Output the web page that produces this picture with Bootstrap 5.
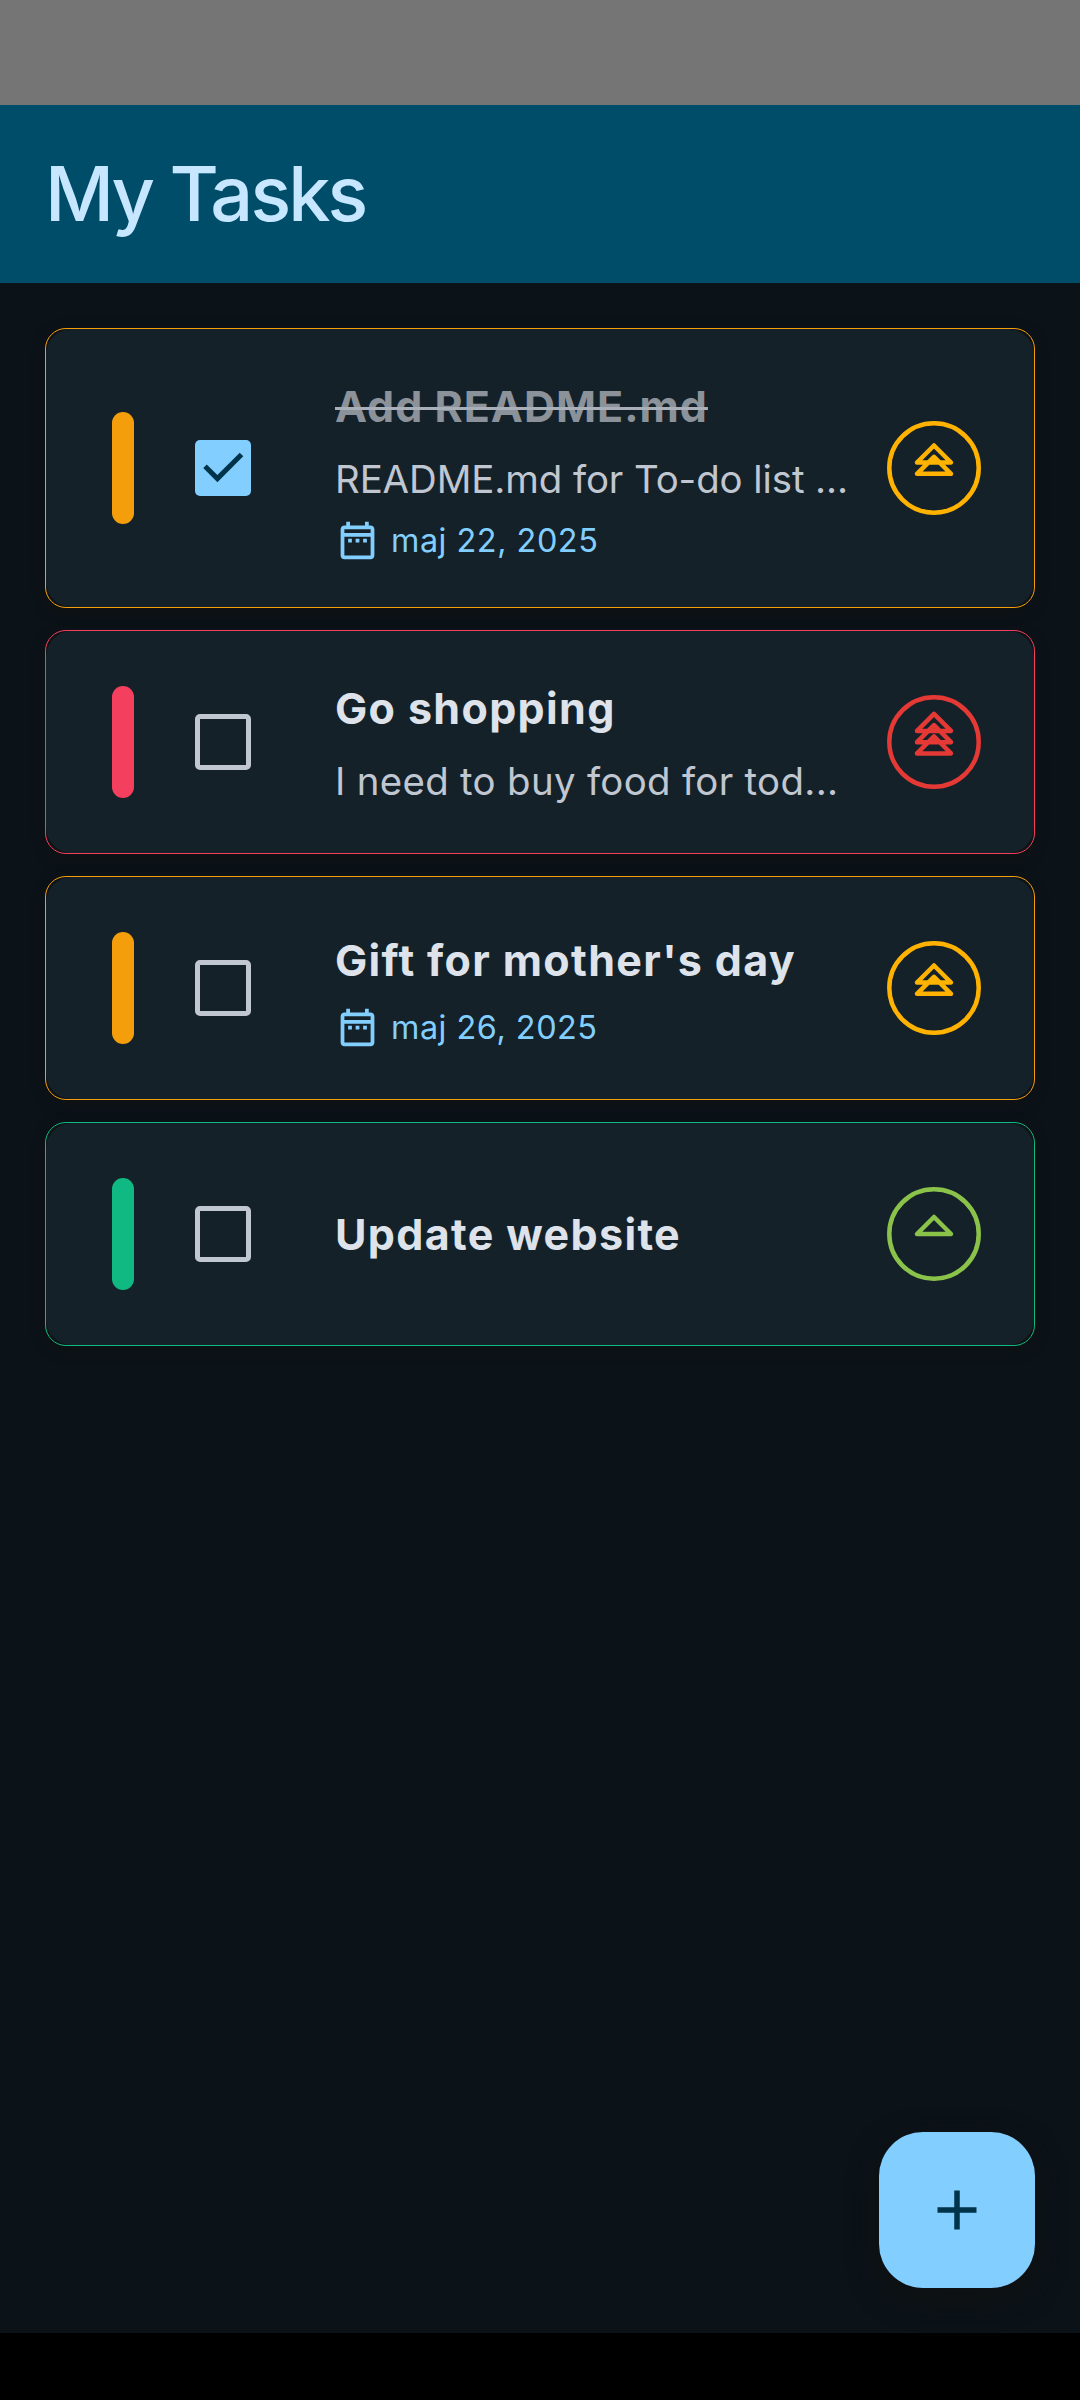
<!DOCTYPE html>
<html lang="en" data-bs-theme="dark">
<head>
<meta charset="utf-8">
<meta name="viewport" content="width=device-width, initial-scale=1">
<title>My Tasks</title>
<link href="https://cdn.jsdelivr.net/npm/bootstrap@5.3.0/dist/css/bootstrap.min.css" rel="stylesheet">
<style>
  body { width: 1080px; height: 2400px; background: #0b1218; font-family: Inter, "Liberation Sans", sans-serif; overflow: hidden; }
  .status-strip { height: 105px; background: #757575; }
  .app-header { height: 178px; background: #004d69; padding: 0 45px; }
  .app-header h1 { font-size: 75.6px; line-height: 1.2; font-weight: 500; letter-spacing: -2.9px; color: #c6e7ff; white-space: nowrap; }
  .task-area { padding: 45px 45px 0; position: relative; }
  .task-stack { gap: 22px; }
  .task-card { height: 224px; border: 1px solid var(--tone); border-radius: 21px; background: #0e1316; box-shadow: 0 4px 12px 1px rgba(15,18,19,.9); }
  .task-card.tall { height: 280px; }
  .task-face { border-radius: 26px; background: #152129; padding: 0 53px 0 66px; }
  .tone-mid { --tone: #f59e0b; --level: #ffb300; }
  .tone-high { --tone: #f43f5e; --level: #e53935; }
  .tone-low { --tone: #10b981; --level: #8bc34a; }
  .tone-bar { width: 22px; height: 112px; border-radius: 11px; background: var(--tone); margin-right: 61px; }
  .tick-box { width: 56px; height: 56px; border: 5px solid #c0c7d1; border-radius: 5px; margin-right: 84px; }
  .tick-box.done { border: 0; background: #82cfff; }
  .task-text { white-space: nowrap; }
  .task-title { font-size: 43px; line-height: 67px; font-weight: 700; letter-spacing: 1.35px; color: #dee3eb; }
  .task-title.done { color: #8b9299; letter-spacing: 1px; }
  .task-title.done span { text-decoration: line-through 3px #a9afb8; }
  .task-note { font-size: 38.4px; line-height: 56px; margin-top: 11px; letter-spacing: -.08px; color: #c0c7d1; }
  .task-note.airy { letter-spacing: .32px; }
  .task-date { font-size: 32.4px; line-height: 45px; height: 45px; margin-top: 11px; gap: 11px; letter-spacing: .52px; color: #82cfff; }
  .add-btn { position: absolute; right: 45px; top: 1849px; width: 156px; height: 156px; border-radius: 44px; background: #82cfff; box-shadow: 0 10px 28px 2px rgba(15,17,17,.95); }
  .nav-strip { height: 67px; background: #000; }
</style>
<script src="https://cdn.jsdelivr.net/npm/bootstrap@5.3.0/dist/js/bootstrap.bundle.min.js"></script>
</head>
<body class="d-flex flex-column">
<svg width="0" height="0" class="position-absolute" aria-hidden="true">
  <symbol id="cal" viewBox="0 0 24 24"><path fill="currentColor" d="M7 11h2v2H7zM21 6v14c0 1.100-.9 2-2 2H5c-1.110 0-2-.9-2-2L3.010 6c0-1.100.88-2 1.990-2h1V2h2v2h8V2h2v2h1c1.100 0 2 .9 2 2zM5 8h14V6H5zm14 12V10H5v10zm-4-7h2v-2h-2zm-4 0h2v-2h-2z"/></symbol>
</svg>
<div class="status-strip flex-shrink-0"></div>
<header class="app-header d-flex align-items-center flex-shrink-0"><h1 class="m-0">My Tasks</h1></header>
<main class="task-area flex-grow-1">
  <div class="task-stack d-flex flex-column">
    <article class="task-card tall tone-mid">
      <div class="task-face h-100 d-flex align-items-center">
        <div class="tone-bar flex-shrink-0"></div>
        <div class="tick-box done flex-shrink-0"><svg class="d-block" width="56" height="56" viewBox="0 0 56 56"><path d="M10 26.200 22.400 38.600 46.500 14.500" fill="none" stroke="#00344a" stroke-width="5"/></svg></div>
        <div class="task-text">
          <div class="task-title done"><span>Add README.md</span></div>
          <div class="task-note">README.md for To-do list ...</div>
          <div class="task-date d-flex align-items-center"><svg width="45" height="45"><use href="#cal"/></svg><span>maj 22, 2025</span></div>
        </div>
        <svg class="ms-auto flex-shrink-0" width="94" height="94" viewBox="-47 -47 94 94" fill="none" stroke="var(--level)" stroke-width="4.500" stroke-linejoin="round"><circle r="44.700"/><path d="M0-22.500 17-5.500H-17ZM0-11.200 17 5.800H-17Z"/></svg>
      </div>
    </article>
    <article class="task-card tone-high">
      <div class="task-face h-100 d-flex align-items-center">
        <div class="tone-bar flex-shrink-0"></div>
        <div class="tick-box flex-shrink-0"></div>
        <div class="task-text">
          <div class="task-title">Go shopping</div>
          <div class="task-note airy">I need to buy food for tod...</div>
        </div>
        <svg class="ms-auto flex-shrink-0" width="94" height="94" viewBox="-47 -47 94 94" fill="none" stroke="var(--level)" stroke-width="4.500" stroke-linejoin="round"><circle r="44.700"/><path d="M0-28.100 17-11.100H-17ZM0-16.800 17 .2H-17ZM0-5.600 17 11.400H-17Z"/></svg>
      </div>
    </article>
    <article class="task-card tone-mid">
      <div class="task-face h-100 d-flex align-items-center">
        <div class="tone-bar flex-shrink-0"></div>
        <div class="tick-box flex-shrink-0"></div>
        <div class="task-text">
          <div class="task-title">Gift for mother's day</div>
          <div class="task-date d-flex align-items-center"><svg width="45" height="45"><use href="#cal"/></svg><span>maj 26, 2025</span></div>
        </div>
        <svg class="ms-auto flex-shrink-0" width="94" height="94" viewBox="-47 -47 94 94" fill="none" stroke="var(--level)" stroke-width="4.500" stroke-linejoin="round"><circle r="44.700"/><path d="M0-22.500 17-5.500H-17ZM0-11.200 17 5.800H-17Z"/></svg>
      </div>
    </article>
    <article class="task-card tone-low">
      <div class="task-face h-100 d-flex align-items-center">
        <div class="tone-bar flex-shrink-0"></div>
        <div class="tick-box flex-shrink-0"></div>
        <div class="task-text"><div class="task-title">Update website</div></div>
        <svg class="ms-auto flex-shrink-0" width="94" height="94" viewBox="-47 -47 94 94" fill="none" stroke="var(--level)" stroke-width="4.500" stroke-linejoin="round"><circle r="44.700"/><path d="M0-17 17 0H-17Z"/></svg>
      </div>
    </article>
  </div>
  <button type="button" class="add-btn btn border-0 p-0 d-flex align-items-center justify-content-center" aria-label="Add task"><svg width="40" height="40" viewBox="0 0 40 40"><path d="M.5 20h39M20 .5v39" stroke="#00344a" stroke-width="5.500"/></svg></button>
</main>
<footer class="nav-strip flex-shrink-0"></footer>
</body>
</html>
